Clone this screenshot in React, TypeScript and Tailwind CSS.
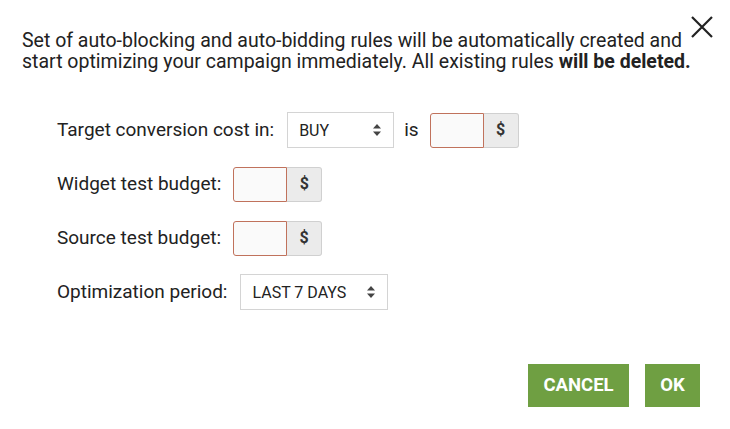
import React from "react";

const Arrows = () => (
  <svg width="10" height="14" viewBox="0 0 10 14" className="text-[#444]">
    <path d="M5 1 L9 5.5 H1 Z" fill="currentColor" />
    <path d="M5 13 L9 8.5 H1 Z" fill="currentColor" />
  </svg>
);

const Select = ({ value, w }: { value: string; w: string }) => (
  <div className={`flex items-center justify-between h-[36px] border border-[#d4d4d4] bg-white pl-[11px] pr-[11px] ${w}`}>
    <span className="text-[16px] text-[#222] pt-[2px]">{value}</span>
    <Arrows />
  </div>
);

const Money = () => (
  <div className="flex h-[35px]">
    <div className="w-[54px] h-full border border-[#c0725c] rounded-l-[3px] bg-[#fafafa]" />
    <div className="w-[35px] h-full bg-[#ebebeb] border border-l-0 border-[#d0d0d0] rounded-r-[3px] flex items-center justify-center text-[16px] font-bold text-[#333]">
      $
    </div>
  </div>
);

export default function App() {
  return (
    <div
      className="w-[730px] h-[429px] bg-white relative text-[#222]"
      style={{ fontFamily: "Roboto, 'Liberation Sans', sans-serif" }}
    >
      <button className="absolute left-[690px] top-[15px] text-[#222]">
        <svg width="24" height="24" viewBox="0 0 24 24">
          <path d="M2 2 L22 22 M22 2 L2 22" stroke="currentColor" strokeWidth="2.2" />
        </svg>
      </button>
      <div className="pt-[30px] pl-[22px]">
        <p className="text-[19.5px] leading-[21px] whitespace-nowrap">
          Set of auto-blocking and auto-bidding rules will be automatically created and
          <br />
          start optimizing your campaign immediately. All existing rules <b>will be deleted.</b>
        </p>
        <div className="pl-[35px] pt-[40px] flex flex-col gap-[18px] text-[19px]">
          <div className="flex items-center h-[36px]">
            <span className="mr-[13px]">Target conversion cost in:</span>
            <Select value="BUY" w="w-[107px]" />
            <span className="ml-[10px] mr-[11px]">is</span>
            <Money />
          </div>
          <div className="flex items-center h-[36px]">
            <span className="mr-[12px]">Widget test budget:</span>
            <Money />
          </div>
          <div className="flex items-center h-[36px]">
            <span className="mr-[12px]">Source test budget:</span>
            <Money />
          </div>
          <div className="flex items-center h-[36px]">
            <span className="mr-[13px]">Optimization period:</span>
            <Select value="LAST 7 DAYS" w="w-[148px]" />
          </div>
        </div>
        <div className="flex justify-end gap-[16px] mt-[54px] pr-[30px]">
          <button className="h-[43px] w-[101px] bg-[#6f9f42] text-white font-bold text-[18.5px]">CANCEL</button>
          <button className="h-[43px] w-[55px] bg-[#6f9f42] text-white font-bold text-[18.5px]">OK</button>
        </div>
      </div>
    </div>
  );
}
